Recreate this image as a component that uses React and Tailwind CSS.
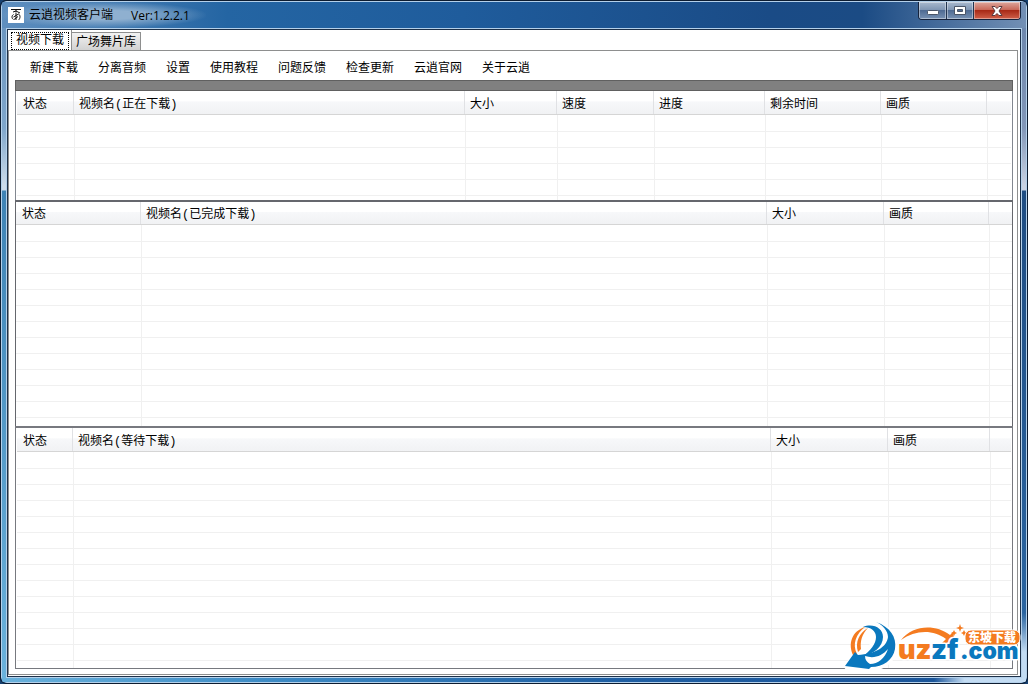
import React, { useState } from 'react';

const menuItems = ['新建下载', '分离音频', '设置', '使用教程', '问题反馈', '检查更新', '云逍官网', '关于云逍'];

const tabs = ['视频下载', '广场舞片库'];

function AppIcon() {
  return (
    <svg viewBox="0 0 16 16" className="size-4 bg-white" fill="none" stroke="#111" aria-hidden="true">
      <path d="M3 2.5h10M8 2.5v3M5 5l3-1 4 2M5.500 7.500c-2 1-2 4 0 5M8 6v7M10.500 7c2 1 2 4.500 0 6M5.500 10l5-3M6 12.500l4-3" />
    </svg>
  );
}

function TitleBar() {
  return (
    <header className="flex h-[26px] items-start justify-between bg-[linear-gradient(to_right,#5f8fbf_0,#2465a3_22%,#1f5c9c_45%,#1a4b86_75%,#1b4b84_84%,#7390b5_100%)]">
      <div className="flex h-full items-center gap-[5px] bg-[radial-gradient(ellipse_at_center,#8fb0d0_25%,#8fb0d000_72%)] pr-4 pl-1.5">
        <AppIcon />
        <h1 className="flex gap-[18px] pt-0.5 text-xs text-black">
          <span>云逍视频客户端</span>
          <span className="font-['Open_Sans']">Ver:1.2.2.1</span>
        </h1>
      </div>
      <div className="mr-[5px] flex h-[18px] overflow-hidden rounded-b border border-t-0 border-[#16233c]">
        <button
          aria-label="最小化"
          className="flex w-7 items-center justify-center border-r border-[#22344f] bg-[linear-gradient(#a9b9ce_0,#8096b4_45%,#4f6b93_50%,#7892b4_100%)] shadow-[inset_0_0_0_1px_#ffffff66]"
        >
          <svg viewBox="0 0 12 10" className="h-2.5 w-3" aria-hidden="true">
            <rect x="0.5" y="4.500" width="11" height="4" rx="1" fill="#fff" stroke="#4a5568" />
          </svg>
        </button>
        <button
          aria-label="最大化"
          className="flex w-[27px] items-center justify-center border-r border-[#22344f] bg-[linear-gradient(#a9b9ce_0,#8096b4_45%,#4f6b93_50%,#7892b4_100%)] shadow-[inset_0_0_0_1px_#ffffff66]"
        >
          <svg viewBox="0 0 12 10" className="h-2.5 w-3" aria-hidden="true">
            <path d="M.5.5h11v8H.500z M3.500 3.500h5v2h-5z" fill="#fff" fillRule="evenodd" stroke="#4a5568" />
          </svg>
        </button>
        <button
          aria-label="关闭"
          className="flex w-[46px] items-center justify-center bg-[linear-gradient(#dda79d_0,#c9695a_45%,#a82a17_50%,#d0604a_100%)] shadow-[inset_0_0_0_1px_#ffffff66]"
        >
          <svg viewBox="0 0 12 10" className="h-2.5 w-3" aria-hidden="true">
            <path d="M1 .5h3l2 2 2-2h3L8 5l3 4.500H8l-2-2-2 2H1L4 5z" fill="#fff" stroke="#5b3a3f" />
          </svg>
        </button>
      </div>
    </header>
  );
}

function TabBar({ active, onChange }) {
  return (
    <div role="tablist" className="flex h-5 items-end pl-px">
      {tabs.map((tab, i) =>
        i === active ? (
          <button key={tab} role="tab" aria-selected="true" className="h-5 border-r border-[#8e8f8f] bg-white px-0.5 pt-0.5">
            <span className="flex h-[18px] items-center border border-dotted border-black px-1">{tab}</span>
          </button>
        ) : (
          <button
            key={tab}
            role="tab"
            aria-selected="false"
            onClick={() => onChange(i)}
            className="h-[18px] border-t border-r border-[#8e8f8f] bg-linear-to-b from-[#f2f2f2] to-[#d2d2d2] px-1 pt-0.5"
          >
            {tab}
          </button>
        )
      )}
    </div>
  );
}

function MenuBar() {
  return (
    <nav className="flex h-[29px] items-end px-[5px]">
      {menuItems.map((item) => (
        <button key={item} className="h-[22px] px-2.5">
          {item}
        </button>
      ))}
    </nav>
  );
}

// Header cells sit one pixel left of the grid lines below them.
// The last row is left to be cut off by the list's frame.
function DownloadList({ columns, rows, label, compact }) {
  return (
    <table aria-label={label} className="w-full table-fixed border-separate border-spacing-0">
      <colgroup>
        {columns.map((col, i) => (
          <col key={i} className={col.width} />
        ))}
      </colgroup>
      <thead>
        <tr>
          {columns.map((col, i) => (
            <th
              key={i}
              scope="col"
              className="border-b border-[#d5d5d5] bg-[linear-gradient(#fff_0,#fff_45%,#f7f8fa_46%,#f1f2f4_100%)] p-0 pr-px text-left font-normal"
            >
              <div
                className={`flex items-center border-[#e0e1e4] ${compact ? 'h-[22px] pt-[3px]' : 'h-[23px] pt-1'} ${
                  i === 0 ? 'pl-1.5' : 'pl-1'
                } ${i < columns.length - 1 ? 'border-r' : ''}`}
              >
                {col.title}
              </div>
            </th>
          ))}
        </tr>
      </thead>
      <tbody>
        {Array.from({ length: rows }, (_, r) => (
          <tr key={r}>
            {columns.map((col, i) => (
              <td
                key={i}
                className={`border-b border-[#f0f0f0] p-0 ${r === 0 ? 'h-[17px]' : 'h-4'} ${
                  i < columns.length - 1 ? 'border-r' : ''
                }`}
              />
            ))}
          </tr>
        ))}
      </tbody>
    </table>
  );
}

const downloading = [
  { title: '状态', width: 'w-[58px]' },
  { title: '视频名(正在下载)', width: 'w-auto' },
  { title: '大小', width: 'w-[92px]' },
  { title: '速度', width: 'w-[97px]' },
  { title: '进度', width: 'w-[111px]' },
  { title: '剩余时间', width: 'w-[116px]' },
  { title: '画质', width: 'w-[106px]' },
  { title: '', width: 'w-[23px]' },
];

const finished = [
  { title: '状态', width: 'w-[126px]' },
  { title: '视频名(已完成下载)', width: 'w-auto' },
  { title: '大小', width: 'w-[117px]' },
  { title: '画质', width: 'w-[105px]' },
  { title: '', width: 'w-[22px]' },
];

const waiting = [
  { title: '状态', width: 'w-[57px]' },
  { title: '视频名(等待下载)', width: 'w-auto' },
  { title: '大小', width: 'w-[117px]' },
  { title: '画质', width: 'w-[102px]' },
  { title: '', width: 'w-5' },
];

function SiteLogo() {
  return (
    <svg viewBox="0 0 184 56" className="absolute right-0 bottom-2 h-14 w-46" role="img" aria-label="uzzf.com 东坡下载">
      <g stroke="#fff" strokeWidth="5" strokeLinejoin="round" fill="#fff">
        <path d="M26 7C40 3 52 13 52 27c0 15-14 25-31 22L4 48l10-15 7 4c8-6 13-17 5-30z" />
      </g>
      {/* swirl */}
      <path d="M22 8C9 12 4 25 11 38l3-3C9 25 13 15 22 8z" fill="#f47b20" />
      <path d="M25 9c-9 5-13 14-10 24l3-3c-1-8 1-15 7-21z" fill="#f47b20" />
      <path d="M33 3c14 5 21 15 19 27-2 11-12 18-24 18l-2 2L2 47l10-14 3 3c17-1 29-8 30-18 0-6-5-12-12-15z" fill="#0a78be" />
      <path d="M20 8c10-4 20 1 20 10 0 10-10 17-21 20 9-7 14-13 14-20 0-6-5-10-13-10z" fill="#0a78be" />
      <path d="M22 37c9 3 17 0 23-7-3 9-10 15-18 15-3-2-5-4-5-8z" fill="#fff" />
      {/* arc arrow over the name */}
      <path d="M58 21C70 6 92 5 107 16l3-3 2 12-13-1 4-4C90 10 72 11 58 21z" fill="#f47b20" />
      <g fontFamily="Inter" fontWeight="900" stroke="#fff" strokeWidth="3" strokeLinejoin="round" paintOrder="stroke">
        <text x="55" y="40" fontSize="27" fill="#f47b20">uz</text>
        <text x="88" y="40" fontSize="27" fill="#0a78be">zf</text>
        <text x="117" y="40" fontSize="23" fill="#0a78be">.com</text>
      </g>
      <path d="M117 5l1 3 3 1-3 1-1 3-1-3-3-1 3-1zM111 11l1 2 2 1-2 1-1 2-1-2-2-1 2-1zM121 11l1 2 2 1-2 1-1 2-1-2-2-1 2-1z" fill="#f47b20" />
      <rect x="122" y="11" width="55" height="15" rx="6" fill="#f47b20" stroke="#fff" />
      <text x="125" y="23" fontSize="12" fontWeight="900" fill="#fff" fontFamily="Noto Sans CJK SC">东坡下载</text>
    </svg>
  );
}

export default function App() {
  const [active, setActive] = useState(0);

  return (
    <div className="h-screen bg-[#16406f] font-['Liberation_Mono','Noto_Sans_CJK_SC',monospace] text-xs text-black">
      <div className="relative flex h-full flex-col overflow-hidden rounded-md border border-[#0d1c30]">
        <div className="flex min-h-0 flex-1 flex-col rounded-md border border-[#b4d0ea]">
          <TitleBar />
          <div className="flex min-h-0 flex-1">
            <div className="w-1 bg-[linear-gradient(#6b96c0_0,#7fa6cb_100px,#cddcea_158px,#cddcea_162px,#3f83b5_163px,#6ab2dc_100%)]" />
            <main className="flex min-w-0 flex-1 flex-col border border-[#b4d0ea]">
              <div className="flex min-h-0 flex-1 flex-col border border-[#1d3048] bg-white pb-px">
                <TabBar active={active} onChange={setActive} />
                <div className="mr-0.5 flex min-h-0 flex-1 flex-col border border-[#8e8f8f] pr-1 pb-[5px] pl-1.5">
                  <MenuBar />
                  <div className="h-[11px] border border-[#606060] bg-[#808080]" />
                  <section className="h-[109px] overflow-hidden border-x border-[#828790] px-px">
                    <DownloadList columns={downloading} rows={6} label="正在下载" />
                  </section>
                  <section className="h-[226px] overflow-hidden border-x border-t-2 border-[#65676d]">
                    <DownloadList columns={finished} rows={13} label="已完成下载" compact />
                  </section>
                  <section className="min-h-0 flex-1 overflow-hidden border-x border-t-2 border-b border-[#77797f] px-px">
                    <DownloadList columns={waiting} rows={14} label="等待下载" />
                  </section>
                </div>
              </div>
            </main>
            <div className="w-1 bg-[linear-gradient(#6d87ad_0,#8297b8_100px,#c9d2e2_158px,#c9d2e2_162px,#1f4d83_163px,#2a64a0_90%,#c3dcf3_96%)]" />
          </div>
          <div className="h-1 bg-[linear-gradient(to_right,#6ab2dc_0,#3f8dc6_25%,#1f5fa3_60%,#1c569a_91%,#c3dcf3_94%)]" />
        </div>
        <SiteLogo />
      </div>
    </div>
  );
}
